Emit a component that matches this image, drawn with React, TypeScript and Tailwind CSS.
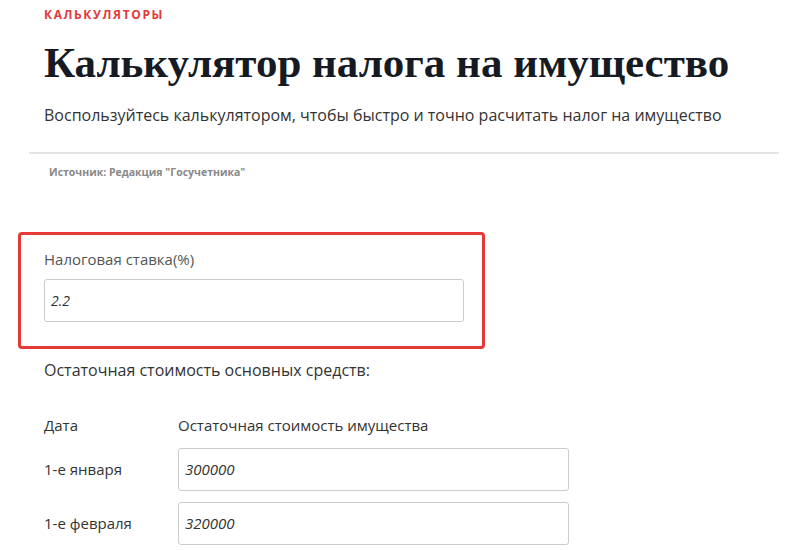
const sans = { fontFamily: '"Open Sans", "Liberation Sans", sans-serif' };

function Row({ date, value }: { date: string; value: string }) {
  return (
    <div className="flex items-center h-[43px]">
      <div className="w-[134px] text-[15px] text-[#333]">{date}</div>
      <input
        defaultValue={value}
        className="w-[391px] h-[43px] border border-[#ccc] rounded-[3px] px-[6px] text-[15px] italic text-[#333] outline-none"
      />
    </div>
  );
}

export default function App() {
  return (
    <div className="w-[797px] h-[550px] overflow-hidden bg-white" style={sans}>
      <div className="pl-[44px] pt-[6px]">
        <div className="text-[12px] font-bold tracking-[1.6px] text-[#e2393a]">КАЛЬКУЛЯТОРЫ</div>
        <h1
          className="mt-[13px] text-[43px] leading-[52px] font-bold text-[#151a23]"
          style={{ fontFamily: '"Liberation Serif", serif' }}
        >
          Калькулятор налога на имущество
        </h1>
        <p className="mt-[14px] text-[16px] leading-[24px] text-[#333]">
          Воспользуйтесь калькулятором, чтобы быстро и точно расчитать налог на имущество
        </p>
      </div>
      <div className="ml-[29px] w-[750px] mt-[25px] h-[2px] bg-[#e5e5e5]" />
      <div className="pl-[49px] mt-[11px] text-[10.5px] font-bold text-[#888]">Источник: Редакция "Госучетника"</div>

      <div className="ml-[18px] mt-[51px] w-[467px] h-[117px] border-[3px] border-[#e53935] rounded-[4px] pl-[23px] pr-[18px] pt-[13px]">
        <div className="text-[15px] leading-[22px] text-[#555]">Налоговая ставка(%)</div>
        <input
          defaultValue="2.2"
          className="mt-[9px] w-[420px] h-[43px] border border-[#ccc] rounded-[3px] px-[6px] text-[14px] italic text-[#333] outline-none"
        />
      </div>

      <div className="pl-[44px]">
        <div className="mt-[9px] text-[16px] leading-[24px] text-[#333]">Остаточная стоимость основных средств:</div>
        <div className="mt-[32px] flex text-[15px] leading-[22px] text-[#333]">
          <div className="w-[134px]">Дата</div>
          <div>Остаточная стоимость имущества</div>
        </div>
        <div className="mt-[12px] flex flex-col gap-[11px]">
          <Row date="1-е января" value="300000" />
          <Row date="1-е февраля" value="320000" />
        </div>
      </div>
    </div>
  );
}
